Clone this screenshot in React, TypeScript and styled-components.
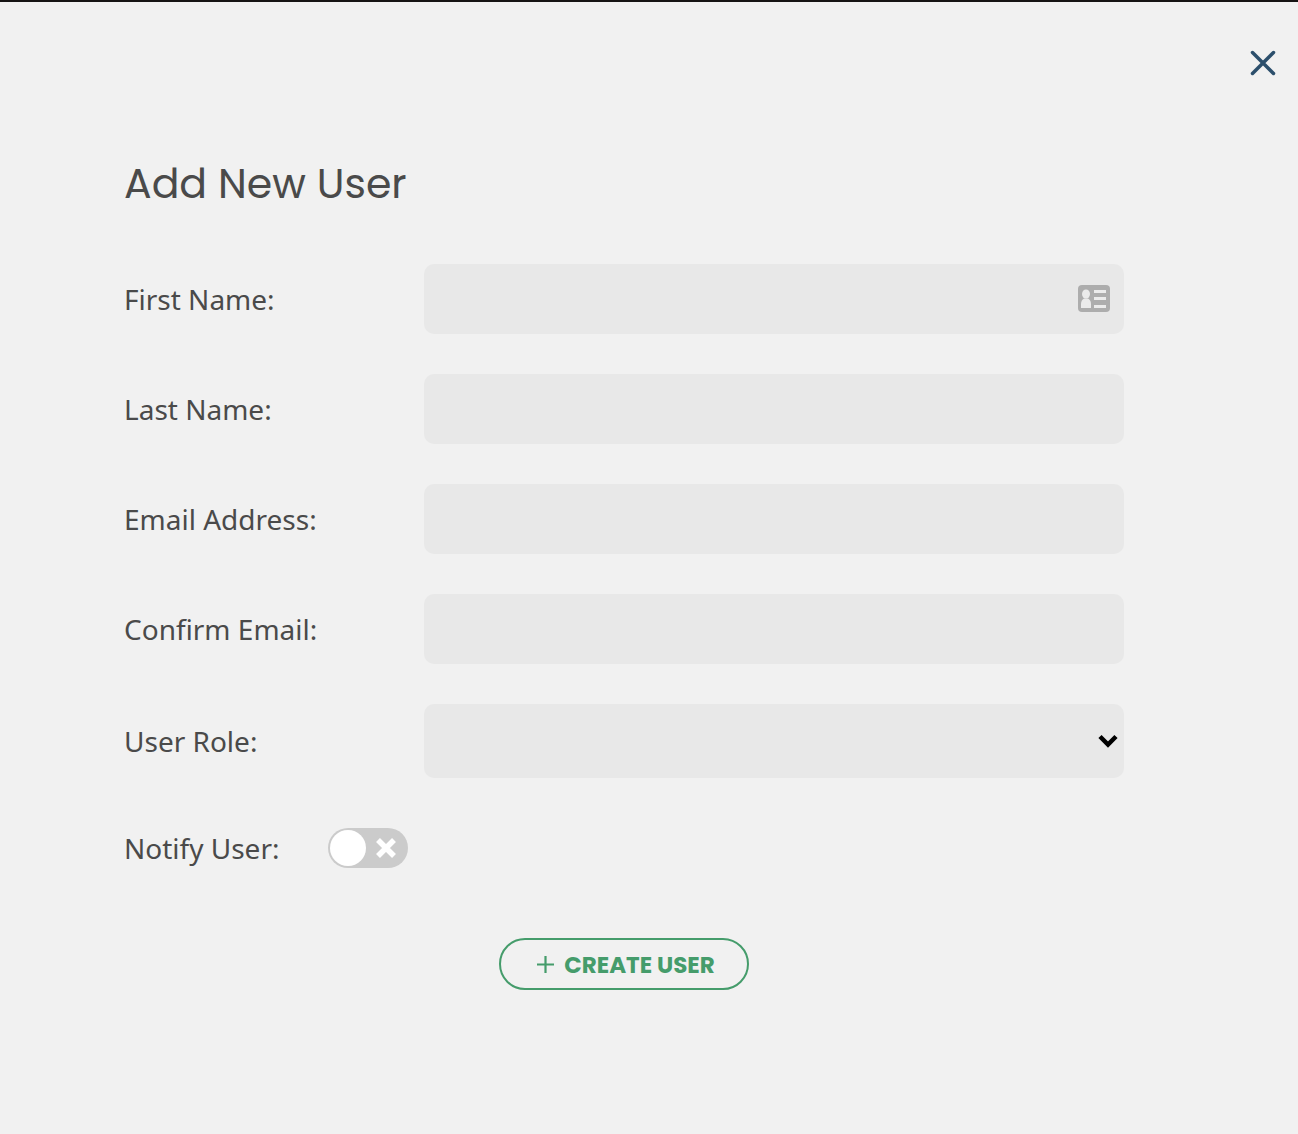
import React, { useState } from 'react';
import styled, { createGlobalStyle } from 'styled-components';

const GlobalStyle = createGlobalStyle`
  *, *::before, *::after { box-sizing: border-box; }
  body {
    margin: 0;
    background: #f1f1f1;
    color: #4a4a4a;
    font-family: 'Noto Sans', 'Open Sans', sans-serif;
  }
`;

const Dialog = styled.main`
  min-height: 100vh;
  border-top: 2px solid #161414;
  padding-bottom: 40px;
`;

const TopBar = styled.header`
  display: flex;
  justify-content: flex-end;
  padding: 44px 18px 0;
`;

const CloseButton = styled.button`
  display: flex;
  padding: 4px;
  border: 0;
  background: none;
  cursor: pointer;
`;

const Form = styled.form`
  max-width: 1174px;
  padding: 74px 50px 0 124px;
`;

const Title = styled.h1`
  margin: 0 0 50px;
  font-family: Poppins, Inter, sans-serif;
  font-size: 41px;
  font-weight: 400;
  line-height: 60px;
`;

const Fields = styled.div`
  display: flex;
  flex-direction: column;
  gap: 40px;
`;

const FieldRow = styled.div`
  display: grid;
  grid-template-columns: 300px minmax(0, 1fr);
  align-items: center;
`;

const Label = styled.label`
  font-size: 28px;
  line-height: 40px;
`;

const Control = styled.div`
  display: grid;
  align-items: center;

  > * { grid-area: 1 / 1; }
`;

const Input = styled.input`
  width: 100%;
  height: 70px;
  padding: 0 20px;
  border: 0;
  border-radius: 10px;
  background: #e8e8e8;
  color: inherit;
  font: inherit;
  font-size: 28px;
`;

const Select = styled.select`
  appearance: none;
  width: 100%;
  height: 74px;
  padding: 0 40px 0 20px;
  border: 0;
  border-radius: 10px;
  background: #e8e8e8;
  color: inherit;
  font: inherit;
  font-size: 28px;
`;

const Adornment = styled.svg<{ $inset: number }>`
  justify-self: end;
  margin-right: ${({ $inset }) => $inset}px;
  pointer-events: none;
`;

const NotifyRow = styled.div`
  display: flex;
  align-items: center;
  gap: 48px;
  margin-top: 50px;
`;

const Switch = styled.span`
  display: grid;
  width: 80px;
  height: 40px;

  > * { grid-area: 1 / 1; }
`;

const SwitchInput = styled.input`
  appearance: none;
  display: flex;
  width: 80px;
  height: 40px;
  margin: 0;
  padding: 2px;
  border-radius: 20px;
  background: #cbcbcb;
  cursor: pointer;

  &::before {
    content: '';
    width: 36px;
    height: 36px;
    border-radius: 50%;
    background: #fff;
  }

  &:checked {
    justify-content: flex-end;
    background: #459c6b;
  }
`;

const SwitchMark = styled.svg`
  align-self: center;
  justify-self: end;
  margin-right: 11px;
  pointer-events: none;
`;

const Actions = styled.div`
  display: flex;
  justify-content: center;
  margin-top: 70px;
`;

const CreateButton = styled.button`
  display: flex;
  align-items: center;
  justify-content: center;
  gap: 10px;
  width: 250px;
  height: 52px;
  padding: 2px 0 0 4px;
  border: 2px solid #459c6b;
  border-radius: 26px;
  background: none;
  color: #459c6b;
  font-family: Poppins, Inter, sans-serif;
  font-size: 23px;
  font-weight: 700;
  line-height: 36px;
  white-space: nowrap;
  cursor: pointer;
`;

const ContactCardIcon = () => (
  <Adornment $inset={14} width="32" height="28" viewBox="0 0 32 28" aria-hidden="true">
    <rect width="32" height="27" rx="4" fill="#adadad" />
    <g fill="#ebebeb">
      <ellipse cx="8" cy="9" rx="4" ry="4.500" />
      <path d="M3 23v-4c0-2.500 1-4.500 3-5.500h4c2 1 3 3 3 5.500v4z" />
      <path d="M16 5h12v3H16zM16 12h12v3H16zM16 20h12v3H16z" />
    </g>
  </Adornment>
);

const textFields = [
  { id: 'first-name', label: 'First Name:', type: 'text', card: true },
  { id: 'last-name', label: 'Last Name:', type: 'text', card: false },
  { id: 'email', label: 'Email Address:', type: 'email', card: false },
  { id: 'confirm-email', label: 'Confirm Email:', type: 'email', card: false },
];

export default function App() {
  const [notify, setNotify] = useState(false);

  return (
    <>
      <GlobalStyle />
      <Dialog>
        <TopBar>
          <CloseButton type="button" aria-label="Close">
            <svg width="26" height="26" viewBox="0 0 26 26" aria-hidden="true">
              <path d="M2.500 2.500l21 21M23.500 2.500l-21 21" stroke="#2c4f6c" strokeWidth="3.500" strokeLinecap="round" />
            </svg>
          </CloseButton>
        </TopBar>
        <Form onSubmit={(e) => e.preventDefault()}>
          <Title>Add New User</Title>
          <Fields>
            {textFields.map((f) => (
              <FieldRow key={f.id}>
                <Label htmlFor={f.id}>{f.label}</Label>
                <Control>
                  <Input id={f.id} name={f.id} type={f.type} />
                  {f.card && <ContactCardIcon />}
                </Control>
              </FieldRow>
            ))}
            <FieldRow>
              <Label htmlFor="role">User Role:</Label>
              <Control>
                <Select id="role" name="role" defaultValue="">
                  <option value="" />
                </Select>
                <Adornment $inset={6} width="20" height="14" viewBox="0 0 20 14" aria-hidden="true">
                  <path d="M2 2.500L10 10.500L18 2.500" fill="none" stroke="#000" strokeWidth="4.500" />
                </Adornment>
              </Control>
            </FieldRow>
          </Fields>
          <NotifyRow>
            <Label htmlFor="notify">Notify User:</Label>
            <Switch>
              <SwitchInput
                id="notify"
                type="checkbox"
                role="switch"
                checked={notify}
                onChange={(e) => setNotify(e.target.checked)}
              />
              {!notify && (
                <SwitchMark width="22" height="22" viewBox="0 0 22 22" aria-hidden="true">
                  <path d="M3 3l16 16M19 3L3 19" stroke="#fff" strokeWidth="5.500" />
                </SwitchMark>
              )}
            </Switch>
          </NotifyRow>
          <Actions>
            <CreateButton type="submit">
              <svg width="17" height="18" viewBox="0 0 17 18" aria-hidden="true">
                <path d="M8.500 0v17M0 8.500h17" stroke="currentColor" strokeWidth="2.200" />
              </svg>
              CREATE USER
            </CreateButton>
          </Actions>
        </Form>
      </Dialog>
    </>
  );
}
